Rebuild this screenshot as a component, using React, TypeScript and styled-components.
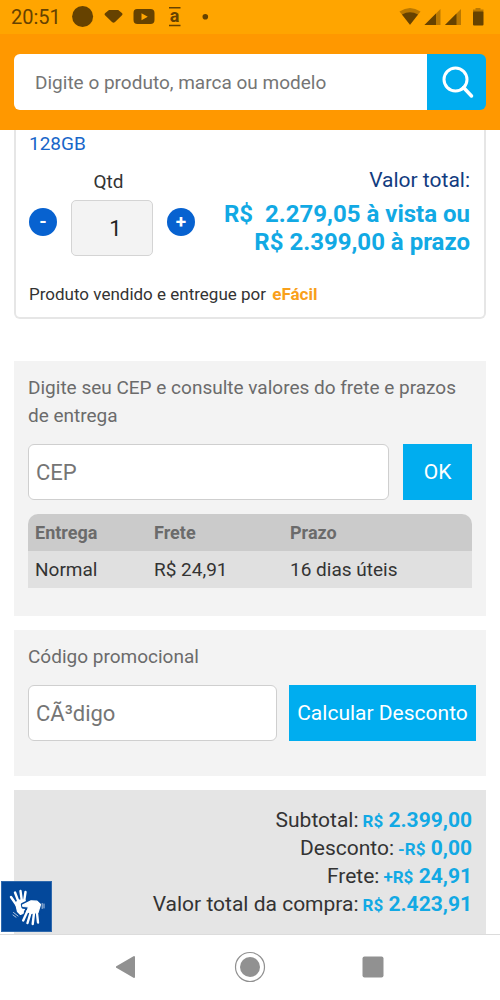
import React from "react";
import styled, { createGlobalStyle } from "styled-components";

const GlobalStyle = createGlobalStyle`
  *, *::before, *::after { box-sizing: border-box; }
  body {
    margin: 0;
    background: #fff;
    color: #333;
    font: 19px/28px Roboto, "Liberation Sans", sans-serif;
  }
  button, input { font: inherit; }
  button { border: 0; padding: 0; cursor: pointer; }
`;

const Screen = styled.div`
  display: flex;
  flex-direction: column;
  min-height: 100vh;
`;

const Header = styled.header`
  position: sticky;
  top: 0;
  z-index: 2;
  background: #ff9800;
`;

const StatusBar = styled.div`
  display: flex;
  align-items: center;
  justify-content: space-between;
  height: 34px;
  padding: 0 16px 0 11px;
  background: #ffa500;
  color: #664200;
  font-size: 20px;
`;

const StatusGroup = styled.div`
  display: flex;
  align-items: center;

  svg { display: block; }
`;

const Clock = styled.time`
  width: 60px;
`;

const SearchForm = styled.form`
  display: flex;
  height: 96px;
  padding: 20px 14px;
`;

const SearchInput = styled.input`
  flex: 1;
  min-width: 0;
  padding: 2px 21px 0;
  border: 0;
  border-radius: 6px 0 0 6px;
  background: #fff;
  outline: none;

  &::placeholder { color: #757575; opacity: 1; }
`;

const SearchButton = styled.button`
  display: grid;
  place-items: center;
  width: 59px;
  border-radius: 0 6px 6px 0;
  background: #00adef;
`;

const Main = styled.main`
  position: relative;
  flex: 1;
  display: flex;
  flex-direction: column;
  gap: 14px;
  padding: 0 14px;
`;

const ProductCard = styled.section`
  margin-bottom: 28px;
  padding: 0 14px 11px 13px;
  border: 2px solid #e6e6e6;
  border-top: 0;
  border-radius: 0 0 6px 6px;
`;

const ProductLink = styled.a`
  display: block;
  color: #1766c9;
  text-decoration: none;
`;

const PurchaseRow = styled.div`
  display: flex;
  justify-content: space-between;
  padding-top: 8px;
`;

const Quantity = styled.div`
  display: flex;
  gap: 14px;
`;

const QuantityField = styled.div`
  display: flex;
  flex-direction: column;
  gap: 4px;
  width: 82px;
  padding-top: 2px;
`;

const QuantityLabel = styled.label`
  padding-right: 7px;
  text-align: center;
`;

const QuantityInput = styled.input`
  width: 100%;
  height: 56px;
  padding: 0 0 0 7px;
  border: 1px solid #d4d4d4;
  border-radius: 5px;
  background: #f3f3f3;
  color: #222;
  font-size: 22px;
  text-align: center;
`;

const StepButton = styled.button`
  width: 28px;
  height: 28px;
  margin-top: 42px;
  border-radius: 50%;
  background: #0762d0;
  color: #fff;
  font-weight: 700;
  line-height: 28px;
`;

const PriceBlock = styled.div`
  display: flex;
  flex-direction: column;
  gap: 6px;
  text-align: right;
`;

const PriceLabel = styled.span`
  color: #123c80;
  font-size: 21px;
`;

const Price = styled.strong`
  color: #12a9e4;
  font-size: 24px;
`;

const Seller = styled.p`
  margin: 26px 0 0;
  font-size: 17px;
  line-height: 24px;

  a {
    margin-left: 2px;
    color: #f9a01b;
    font-weight: 700;
    text-decoration: none;
  }
`;

const Panel = styled.section<{ $bottom: number; $right: number }>`
  padding: 13px ${({ $right }) => $right}px ${({ $bottom }) => $bottom}px 14px;
  background: #f3f3f3;
`;

const PanelLabel = styled.label`
  display: block;
  color: #6b6b6b;
`;

const FieldRow = styled.form<{ $gap: number }>`
  display: flex;
  gap: ${({ $gap }) => $gap}px;
  margin-top: 14px;
`;

const TextInput = styled.input`
  flex: 1;
  min-width: 0;
  height: 56px;
  padding: 0 7px;
  border: 1px solid #cfcfcf;
  border-radius: 6px;
  background: #fff;
  font-size: 22px;

  &::placeholder { color: #757575; opacity: 1; }
`;

const ActionButton = styled.button<{ $width: number }>`
  width: ${({ $width }) => $width}px;
  background: #00adef;
  color: #fff;
  font-size: 21px;
  white-space: nowrap;
`;

const ShippingTable = styled.table`
  width: 100%;
  margin-top: 14px;
  border-spacing: 0;
  border-radius: 10px 10px 0 0;
  overflow: hidden;
  table-layout: fixed;
  text-align: left;

  th, td {
    height: 37px;
    padding: 0 7px;
  }
  th {
    background: #cbcbcb;
    color: #6b6b6b;
    font-size: 18px;
    font-weight: 700;
  }
  td { background: #e0e0e0; }
`;

const Column = styled.col<{ $width?: number }>`
  width: ${({ $width }) => ($width ? `${$width}px` : "auto")};
`;

const Totals = styled.dl`
  flex: 1;
  margin: 0;
  padding: 16px 14px;
  background: #e5e5e5;
  font-size: 21px;
`;

const TotalRow = styled.div`
  display: flex;
  justify-content: flex-end;
  gap: 4px;

  dt, dd { margin: 0; }
  dd {
    color: #12a9e4;
    font-weight: 700;
  }
`;

const Currency = styled.span`
  font-size: 17px;
  line-height: 1;
`;

const SignLanguageButton = styled.button`
  position: absolute;
  left: 1px;
  bottom: 2px;
  display: grid;
  place-items: center;
  width: 51px;
  height: 51px;
  border: 1px solid #2f69ad;
  background: #03489b;
`;

const NavBar = styled.nav`
  position: sticky;
  bottom: 0;
  display: flex;
  justify-content: center;
  gap: 91px;
  height: 66px;
  padding-bottom: 2px;
  border-top: 1px solid #dcdcdc;
  background: #fff;
`;

const NavButton = styled.button`
  display: grid;
  place-items: center;
  width: 32px;
  background: none;
`;

const Notifications = () => (
  <svg width="140" height="24" viewBox="71 5 140 24" fill="#664200" aria-hidden="true">
    <circle cx="82.600" cy="16.500" r="10.500" />
    <path d="M109 10H118.200L122.200 13.200Q123 14.200 122 15.200L115 22Q113.500 23.500 112 22L105 15.200Q104 14.200 105 13.200Z" />
    <path fillRule="evenodd" d="M137 9H150.500Q154.500 9 154.500 13V20Q154.500 24 150.500 24H137.500Q133.500 24 133.500 20V13Q133.500 9 137 9ZM141.500 13.200V20.200L147.800 16.700Z" />
    <path d="M169 7H180.500V8.500H169ZM169 24.700H180.500V26.200H169Z" />
    <text x="174.500" y="21.800" textAnchor="middle" fontFamily="Roboto, sans-serif" fontSize="18" fontWeight="700">a</text>
    <circle cx="205.300" cy="16.800" r="2.800" />
  </svg>
);

const Signals = () => (
  <svg width="85" height="20" viewBox="399 7 85 20" fill="#664200" aria-hidden="true">
    <path opacity=".45" d="M399.500 11.500Q410 4.500 420.500 11.500L410 24.800Z" />
    <path d="M402 14.500Q410 9.800 418 14.500L410 24.800Z" />
    <path opacity=".45" d="M440.500 9V25H424.500Z" />
    <path d="M436 13.500V25H424.500Z" />
    <path opacity=".45" d="M461 9V25H445Z" />
    <path d="M456.500 13.500V25H445Z" />
    <path opacity=".45" d="M475.500 8H480.500V9.500H483.500V12H473V9.500H475.500Z" />
    <rect x="473" y="11.500" width="10.500" height="14" rx="1" />
  </svg>
);

const SearchIcon = () => (
  <svg width="34" height="34" viewBox="0 0 34 34" fill="none" stroke="#fff" aria-hidden="true">
    <circle cx="15.500" cy="14.500" r="11.500" strokeWidth="3" />
    <path d="M23.500 22.500L31.500 31" strokeWidth="3.500" strokeLinecap="round" />
  </svg>
);

const HandsIcon = () => (
  <svg width="50" height="50" viewBox="0 0 50 50" fill="none" stroke="#fff" strokeLinecap="round" strokeLinejoin="round" aria-hidden="true">
    <path d="M14.500 23L9 15M17 21L13 10.500M20 20L18.500 9M22 20L23.500 10" strokeWidth="2.400" />
    <path d="M13.500 21L17 18H23L23.500 22L22 31L18.500 32.500L15.500 29.500Z" fill="#fff" strokeWidth="1.200" />
    <g stroke="#03489b">
      <path d="M25 29L21 38.500" strokeWidth="4.400" />
      <path d="M20.500 22.500L29 18.500L35 19L38.500 22L37 31L29 33L23.500 30L26 25.500L21 25Z" fill="#03489b" strokeWidth="3.400" />
    </g>
    <path d="M25.500 29L21.200 38.500M28.500 31L25.500 41M32 31L30.700 42M34.800 29L36 40.500" strokeWidth="2.400" />
    <path d="M20.500 23L29 18.800L35 19.200L38.500 22.500L36 30.500L29 31.500L25 29.500L26.500 25L21 24.500Z" fill="#fff" strokeWidth="1.200" />
    <path d="M40.200 21.500V26.500M42 22V26M11.500 30.500L16 34M11 33L14 35.200" strokeWidth=".7" />
  </svg>
);

const BackIcon = () => (
  <svg width="22" height="24" viewBox="0 0 22 24" aria-hidden="true">
    <path d="M18 2V22L0.800 12Z" fill="#919191" stroke="#919191" strokeWidth="2" strokeLinejoin="round" />
  </svg>
);

const HomeIcon = () => (
  <svg width="32" height="32" viewBox="0 0 32 32" aria-hidden="true">
    <circle cx="16" cy="16" r="14.500" fill="none" stroke="#919191" strokeWidth="1.200" />
    <circle cx="16" cy="16" r="10" fill="#919191" />
  </svg>
);

const RecentsIcon = () => (
  <svg width="22" height="22" viewBox="0 0 22 22" aria-hidden="true">
    <rect x=".5" y=".5" width="21" height="21" rx="2" fill="#919191" />
  </svg>
);

const totals = [
  { label: "Subtotal:", currency: "R$", value: "2.399,00" },
  { label: "Desconto:", currency: "-R$", value: "0,00" },
  { label: "Frete:", currency: "+R$", value: "24,91" },
  { label: "Valor total da compra:", currency: "R$", value: "2.423,91" },
];

const stop = (event: React.FormEvent) => event.preventDefault();

export default function App() {
  const [quantity, setQuantity] = React.useState(1);

  return (
    <Screen>
      <GlobalStyle />
      <Header>
        <StatusBar>
          <StatusGroup>
            <Clock>20:51</Clock>
            <Notifications />
          </StatusGroup>
          <StatusGroup>
            <Signals />
          </StatusGroup>
        </StatusBar>
        <SearchForm role="search" onSubmit={stop}>
          <SearchInput
            type="text"
            aria-label="Digite o produto, marca ou modelo"
            placeholder="Digite o produto, marca ou modelo"
          />
          <SearchButton type="submit" aria-label="Buscar">
            <SearchIcon />
          </SearchButton>
        </SearchForm>
      </Header>

      <Main>
        <ProductCard>
          <ProductLink href="#produto">128GB</ProductLink>
          <PurchaseRow>
            <Quantity>
              <StepButton
                type="button"
                aria-label="Diminuir quantidade"
                onClick={() => setQuantity(Math.max(1, quantity - 1))}
              >
                -
              </StepButton>
              <QuantityField>
                <QuantityLabel htmlFor="qtd">Qtd</QuantityLabel>
                <QuantityInput id="qtd" type="text" readOnly value={quantity} />
              </QuantityField>
              <StepButton
                type="button"
                aria-label="Aumentar quantidade"
                onClick={() => setQuantity(quantity + 1)}
              >
                +
              </StepButton>
            </Quantity>
            <PriceBlock>
              <PriceLabel>Valor total:</PriceLabel>
              <Price>
                R$&nbsp; 2.279,05 à vista ou
                <br />
                R$ 2.399,00 à prazo
              </Price>
            </PriceBlock>
          </PurchaseRow>
          <Seller>
            Produto vendido e entregue por <a href="#efacil">eFácil</a>
          </Seller>
        </ProductCard>

        <Panel $bottom={28} $right={14}>
          <PanelLabel htmlFor="cep">
            Digite seu CEP e consulte valores do frete e prazos de entrega
          </PanelLabel>
          <FieldRow $gap={14} onSubmit={stop}>
            <TextInput id="cep" type="text" placeholder="CEP" />
            <ActionButton type="submit" $width={69}>OK</ActionButton>
          </FieldRow>
          <ShippingTable>
            <colgroup>
              <Column $width={119} />
              <Column $width={136} />
              <Column />
            </colgroup>
            <thead>
              <tr>
                <th scope="col">Entrega</th>
                <th scope="col">Frete</th>
                <th scope="col">Prazo</th>
              </tr>
            </thead>
            <tbody>
              <tr>
                <td>Normal</td>
                <td>R$ 24,91</td>
                <td>16 dias úteis</td>
              </tr>
            </tbody>
          </ShippingTable>
        </Panel>

        <Panel $bottom={35} $right={10}>
          <PanelLabel htmlFor="codigo">Código promocional</PanelLabel>
          <FieldRow $gap={12} onSubmit={stop}>
            <TextInput id="codigo" type="text" placeholder="CÃ³digo" />
            <ActionButton type="submit" $width={187}>Calcular Desconto</ActionButton>
          </FieldRow>
        </Panel>

        <Totals>
          {totals.map(({ label, currency, value }) => (
            <TotalRow key={label}>
              <dt>{label}</dt>
              <dd>
                <Currency>{currency}</Currency> {value}
              </dd>
            </TotalRow>
          ))}
        </Totals>

        <SignLanguageButton type="button" aria-label="Libras">
          <HandsIcon />
        </SignLanguageButton>
      </Main>

      <NavBar>
        <NavButton type="button" aria-label="Voltar"><BackIcon /></NavButton>
        <NavButton type="button" aria-label="Início"><HomeIcon /></NavButton>
        <NavButton type="button" aria-label="Recentes"><RecentsIcon /></NavButton>
      </NavBar>
    </Screen>
  );
}
